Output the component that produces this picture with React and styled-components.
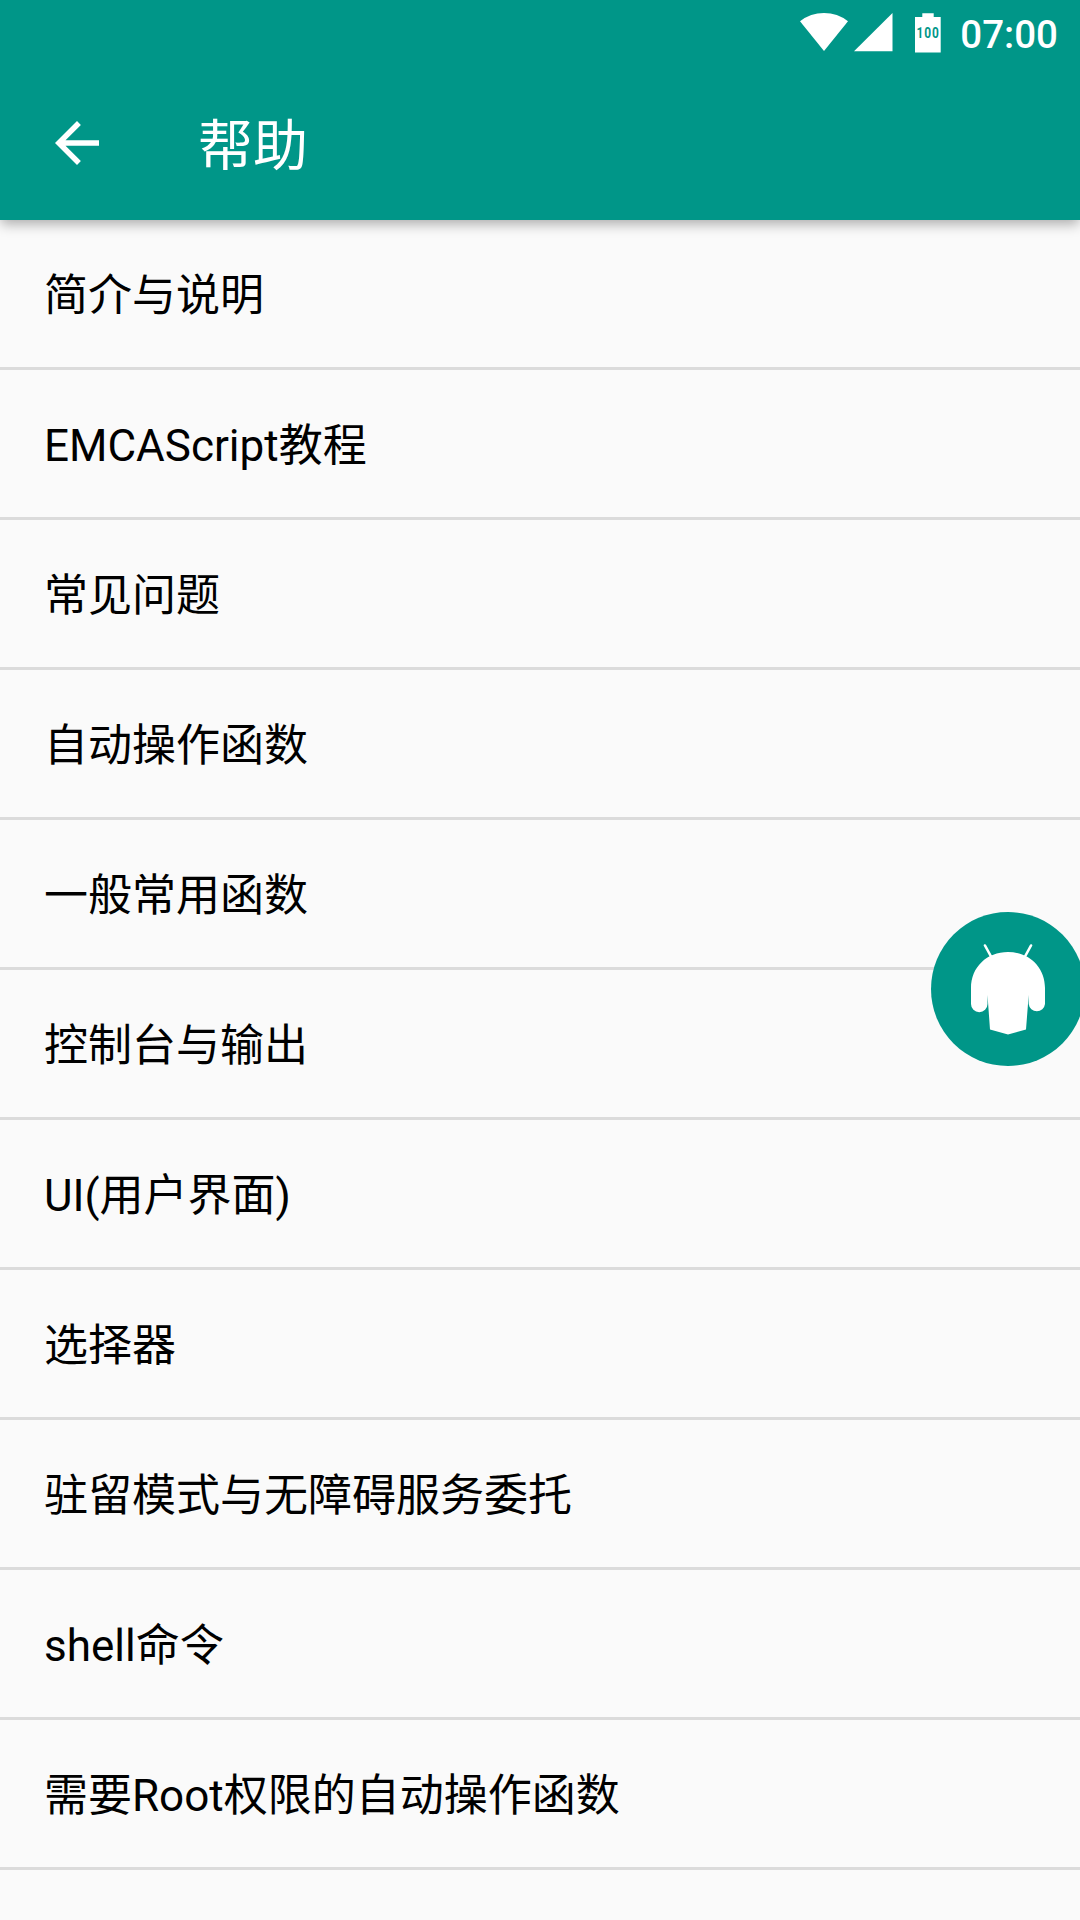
import React from 'react';
import styled, { createGlobalStyle } from 'styled-components';

const GlobalStyle = createGlobalStyle`
  html, body { margin: 0; padding: 0; background: #fafafa; overflow: hidden; }
  * { box-sizing: border-box; }
`;

const Screen = styled.div`
  position: relative;
  display: flex;
  flex-direction: column;
  width: 1080px;
  height: 1920px;
  overflow: hidden;
  background: #fafafa;
  color: #000;
  font-family: Roboto, "Noto Sans CJK SC", sans-serif;
`;

const Header = styled.header`
  flex: none;
  height: 220px;
  background: #009688;
  color: #fff;
  box-shadow: 0 5px 12px -1px rgba(0, 0, 0, 0.32);
  z-index: 1;
`;

const StatusBar = styled.div`
  display: flex;
  align-items: center;
  justify-content: flex-end;
  height: 66px;
  padding-right: 22px;
`;

const StatusIcon = styled.svg`
  display: block;
  flex: none;
  width: ${({ $w }) => $w}px;
  height: 66px;
  margin-right: ${({ $gap }) => $gap}px;
`;

const BatteryLevel = styled.text`
  font-family: Roboto, sans-serif;
  font-size: 14.5px;
  font-weight: 700;
  letter-spacing: 1.2px;
  fill: #009688;
`;

const Clock = styled.span`
  font-size: 38.5px;
  font-weight: 500;
  line-height: 66px;
  padding-top: 3px;
`;

const Toolbar = styled.div`
  display: flex;
  align-items: center;
  height: 154px;
  padding-left: 44px;
`;

const BackIcon = styled.svg`
  display: block;
  width: 66px;
  height: 66px;
  margin-right: 88px;
`;

const Title = styled.h1`
  margin: 0;
  padding-top: 6px;
  font-size: 55px;
  font-weight: 400;
  line-height: 80px;
`;

const List = styled.ul`
  flex: 1;
  margin: 0;
  padding: 0;
  list-style: none;
`;

const Row = styled.li`
  display: flex;
  align-items: center;
  height: 150px;
  padding: 4px 44px 0;
  border-bottom: 3px solid #dbdbdb;
  font-size: 44px;
  line-height: 64px;
  white-space: nowrap;
`;

const FloatingButton = styled.div`
  position: absolute;
  z-index: 2;
  left: 931px;
  top: 912px;
  width: 154px;
  height: 154px;
  border-radius: 50%;
  background: #009688;
`;

const items = [
  '简介与说明',
  'EMCAScript教程',
  '常见问题',
  '自动操作函数',
  '一般常用函数',
  '控制台与输出',
  'UI(用户界面)',
  '选择器',
  '驻留模式与无障碍服务委托',
  'shell命令',
  '需要Root权限的自动操作函数',
];

export default function App() {
  return (
    <Screen>
      <GlobalStyle />
      <Header>
        <StatusBar>
          <StatusIcon $w={48} $gap={6} viewBox="0 0 48 66" fill="#fff">
            <path d="M24 51L0 21.200Q10.500 13 24 13T48 21.200Z" />
          </StatusIcon>
          <StatusIcon $w={39} $gap={22} viewBox="0 0 39 66" fill="#fff">
            <path d="M0 51.300L38.500 13V51.300Z" />
          </StatusIcon>
          <StatusIcon $w={26} $gap={19} viewBox="0 0 26 66" fill="#fff">
            <path d="M0 17H7.300V13.300H18.700V17H25.700V52.500H0Z" />
            <BatteryLevel transform="translate(1.400 38.200) scale(0.820 1)">100</BatteryLevel>
          </StatusIcon>
          <Clock>07:00</Clock>
        </StatusBar>
        <Toolbar>
          <BackIcon viewBox="0 0 24 24" fill="#fff">
            <path d="M20 11H7.830l5.590-5.590L12 4l-8 8 8 8 1.410-1.410L7.830 13H20v-2z" />
          </BackIcon>
          <Title>帮助</Title>
        </Toolbar>
      </Header>
      <List>
        {items.map((label) => (
          <Row key={label}>{label}</Row>
        ))}
      </List>
      <FloatingButton>
        <svg width="154" height="154" viewBox="0 0 154 154" fill="#fff">
          <path d="M54 33.500L60 44.500M100 33.500L94 44.500" stroke="#fff" strokeWidth="2.600" strokeLinecap="round" />
          <path d="M40 76C40 55 56 40 77 40S114 55 114 76V92A8.200 8.200 0 0 1 97.700 92V83L95 117.500L77 122.500L59 117.500L56.500 83V92A8.200 8.200 0 0 1 40 92Z" />
        </svg>
      </FloatingButton>
    </Screen>
  );
}
